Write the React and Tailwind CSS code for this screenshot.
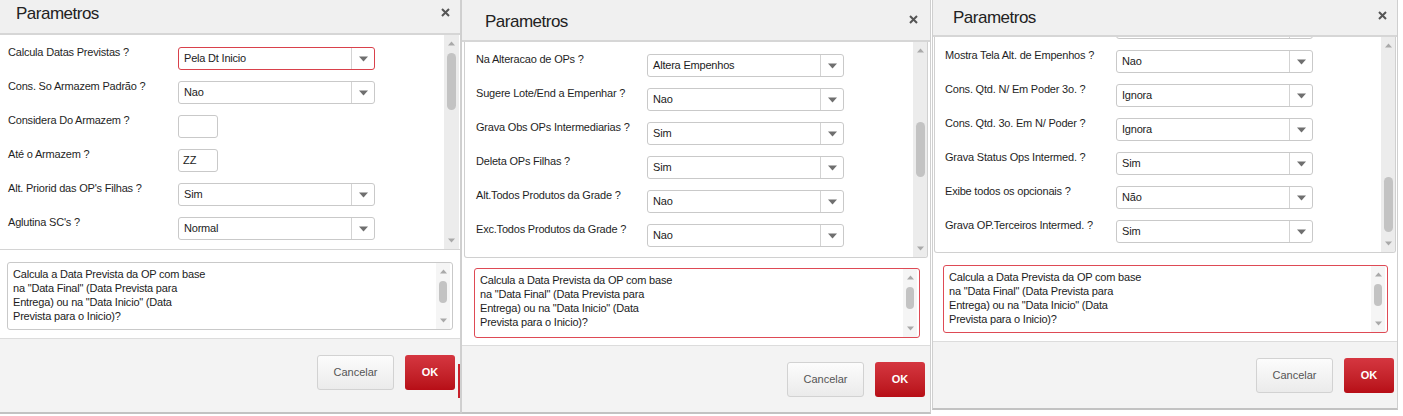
import React from "react";

// three "Parametros" dialogs captured side by side
const panels = [
  {
    panelCls: "w-[461px] border-r border-r-[#d0d0d0]",
    headerCls: "h-[35px] pl-[16px] pr-[10px] pt-[4px]",
    closeCls: "mt-[4px]",
    contentCls: "h-[215px] border-b border-[#d4d4d4]",
    innerCls: "pt-[10px] pl-[8px]",
    labelW: "w-[170px]",
    sbCls: "mr-[1px] w-[15px]",
    thumbCls: "mt-[2px] h-[57px]",
    descCls: "mt-[12px] ml-[7px] h-[68px] w-[446px] border-[#c9c9c9]",
    footerCls: "mt-[8px] h-[74px] pr-0",
    redEdge: true,
    rows: [
      { label: "Calcula Datas Previstas ?", value: "Pela Dt Inicio", red: true },
      { label: "Cons. So Armazem Padrão ?", value: "Nao" },
      { label: "Considera Do Armazem ?", input: "" },
      { label: "Até o Armazem ?", input: "ZZ" },
      { label: "Alt. Priorid das OP's Filhas ?", value: "Sim" },
      { label: "Aglutina SC's ?", value: "Normal" },
    ],
  },
  {
    panelCls: "w-[470px] border-x border-[#cfcfcf]",
    headerCls: "h-[42px] pl-[23px] pr-[12px] pt-[12px]",
    closeCls: "mt-[3px]",
    contentCls: "mx-[2px] h-[216px] rounded-b-[3px] border border-t-0 border-[#d0d0d0]",
    innerCls: "pt-[10px] pl-[11px]",
    labelW: "w-[171px]",
    sbCls: "w-[14px]",
    thumbCls: "mt-[64px] h-[55px]",
    descCls: "mt-[10px] ml-[12px] h-[70px] w-[446px] border-[#de4a55]",
    footerCls: "mt-[7px] h-[67px] pr-[5px]",
    rows: [
      { label: "Na Alteracao de OPs ?", value: "Altera Empenhos" },
      { label: "Sugere Lote/End a Empenhar ?", value: "Nao" },
      { label: "Grava Obs OPs Intermediarias ?", value: "Sim" },
      { label: "Deleta OPs Filhas ?", value: "Sim" },
      { label: "Alt.Todos Produtos da Grade ?", value: "Nao" },
      { label: "Exc.Todos Produtos da Grade ?", value: "Nao" },
    ],
  },
  {
    panelCls: "ml-[1px] w-[466px] border-x border-[#cfcfcf]",
    headerCls: "h-[37px] pl-[20px] pr-[10px] pt-[8px]",
    closeCls: "mt-[3px]",
    contentCls: "mx-[1px] h-[216px] rounded-b-[3px] border border-t-0 border-[#d0d0d0]",
    innerCls: "-mt-[23px] pl-[10px]",
    labelW: "w-[171px]",
    sbCls: "w-[14px]",
    thumbCls: "mt-[124px] h-[55px]",
    descCls: "mt-[12px] ml-[10px] h-[68px] w-[445px] border-[#de4a55]",
    footerCls: "mt-[8px] h-[67px] pr-[3px]",
    rows: [
      // row scrolled out of view, only the select's lower edge shows
      { label: "", value: "" },
      { label: "Mostra Tela Alt. de Empenhos ?", value: "Nao" },
      { label: "Cons. Qtd. N/ Em Poder 3o. ?", value: "Ignora" },
      { label: "Cons. Qtd. 3o. Em N/ Poder ?", value: "Ignora" },
      { label: "Grava Status Ops Intermed. ?", value: "Sim" },
      { label: "Exibe todos os opcionais ?", value: "Não" },
      { label: "Grava OP.Terceiros Intermed. ?", value: "Sim" },
    ],
  },
];

const descLines = [
  "Calcula a Data Prevista da OP com base",
  'na "Data Final" (Data Prevista para',
  'Entrega) ou na "Data Inicio" (Data',
  "Prevista para o Inicio)?",
];

function Tri({ up, dark }) {
  if (dark) {
    return (
      <svg width="9" height="6" viewBox="0 0 9 6">
        <path d="M0 0.5h9L4.5 5.5z" fill="#6f6f6f" />
      </svg>
    );
  }
  return (
    <svg width="7" height="5" viewBox="0 0 7 5">
      <path d={up ? "M0 4.5h7L3.5 0.5z" : "M0 0.5h7L3.5 4.5z"} fill="#a9a9a9" />
    </svg>
  );
}

function CloseIcon() {
  return (
    <svg width="9" height="9" viewBox="0 0 9 9">
      <path d="M1 1l7 7M8 1L1 8" stroke="#555" strokeWidth="2" />
    </svg>
  );
}

function ScrollBar({ cls, thumbCls, thumbW }) {
  return (
    <div className={`flex shrink-0 flex-col items-center ${cls}`}>
      <div className="flex h-[16px] items-center justify-center">
        <Tri up />
      </div>
      <div className={`rounded-[5px] bg-[#c3c3c3] ${thumbW} ${thumbCls}`} />
      <div className="flex-1" />
      <div className="flex h-[18px] items-center justify-center">
        <Tri />
      </div>
    </div>
  );
}

function Select({ value, red }) {
  return (
    <div
      className={`flex h-[23px] w-[197px] rounded-[3px] border bg-white ${
        red ? "border-[#d9414b]" : "border-[#c9c9c9]"
      }`}
    >
      <div className="flex flex-1 items-center pl-[5px] text-[11px] tracking-[-0.2px] text-[#1c1c1c]">
        {value}
      </div>
      <div className="flex w-[23px] items-center justify-center border-l border-[#d3d3d3]">
        <Tri dark />
      </div>
    </div>
  );
}

function Dialog({ p }) {
  return (
    <div className={`flex shrink-0 flex-col border-b-2 border-b-[#c2c2c2] bg-white ${p.panelCls}`}>
      {/* Header */}
      <div className={`flex items-start justify-between border-b-2 border-[#d6d6d6] bg-[#f0f0f0] ${p.headerCls}`}>
        <h1 className="text-[17px] leading-[20px] tracking-[-0.5px] text-[#222]">Parametros</h1>
        <div className={p.closeCls}>
          <CloseIcon />
        </div>
      </div>

      {/* Parameter list */}
      <div className={`flex overflow-hidden bg-white ${p.contentCls}`}>
        <div className="flex-1 overflow-hidden">
          <div className={`flex flex-col ${p.innerCls}`}>
            {p.rows.map((r, i) => (
              <div key={i} className="flex h-[34px] shrink-0 items-start">
                <div className={`shrink-0 text-[11px] leading-[14px] tracking-[-0.2px] text-[#1f1f1f] ${p.labelW}`}>
                  {r.label}
                </div>
                <div className="mt-[2px]">
                  {r.value !== undefined ? (
                    <Select value={r.value} red={r.red} />
                  ) : (
                    <div className="flex h-[23px] w-[40px] items-center rounded-[3px] border border-[#c9c9c9] bg-white pl-[4px] text-[11px] text-[#1c1c1c]">
                      {r.input}
                    </div>
                  )}
                </div>
              </div>
            ))}
          </div>
        </div>
        <ScrollBar cls={`bg-[#ececec] ${p.sbCls}`} thumbCls={p.thumbCls} thumbW="w-[9px]" />
      </div>

      {/* Help text */}
      <div className={`flex rounded-[3px] border bg-white ${p.descCls}`}>
        <div className="flex-1 pl-[5px] pt-[4px] text-[11px] leading-[14px] tracking-[-0.2px] text-[#1c1c1c]">
          {descLines.map((l) => (
            <div key={l}>{l}</div>
          ))}
        </div>
        <ScrollBar cls="mr-[2px] w-[14px] bg-[#f5f5f5]" thumbCls="mt-[2px] h-[22px]" thumbW="w-[8px]" />
      </div>

      {/* Footer */}
      <div className={`flex items-start justify-end border-t border-[#dcdcdc] bg-[#f3f3f3] pt-[16px] ${p.footerCls}`}>
        <button className="h-[35px] w-[77px] rounded-[3px] border border-[#d2d2d2] bg-linear-to-b from-[#fcfcfc] to-[#ebebeb] text-[11px] text-[#555]">
          Cancelar
        </button>
        <button className="ml-[11px] h-[35px] w-[50px] rounded-[3px] bg-linear-to-b from-[#d53640] to-[#b70d16] text-[11px] font-bold text-white">
          OK
        </button>
        {p.redEdge && <div className="ml-[3px] mt-[9px] h-[34px] w-[2px] bg-[#c8202a]" />}
      </div>
    </div>
  );
}

export default function App() {
  return (
    <div className="flex h-[416px] w-[1403px] items-start overflow-hidden bg-white font-['Liberation_Sans',Arial,sans-serif]">
      {panels.map((p, i) => (
        <Dialog key={i} p={p} />
      ))}
    </div>
  );
}
